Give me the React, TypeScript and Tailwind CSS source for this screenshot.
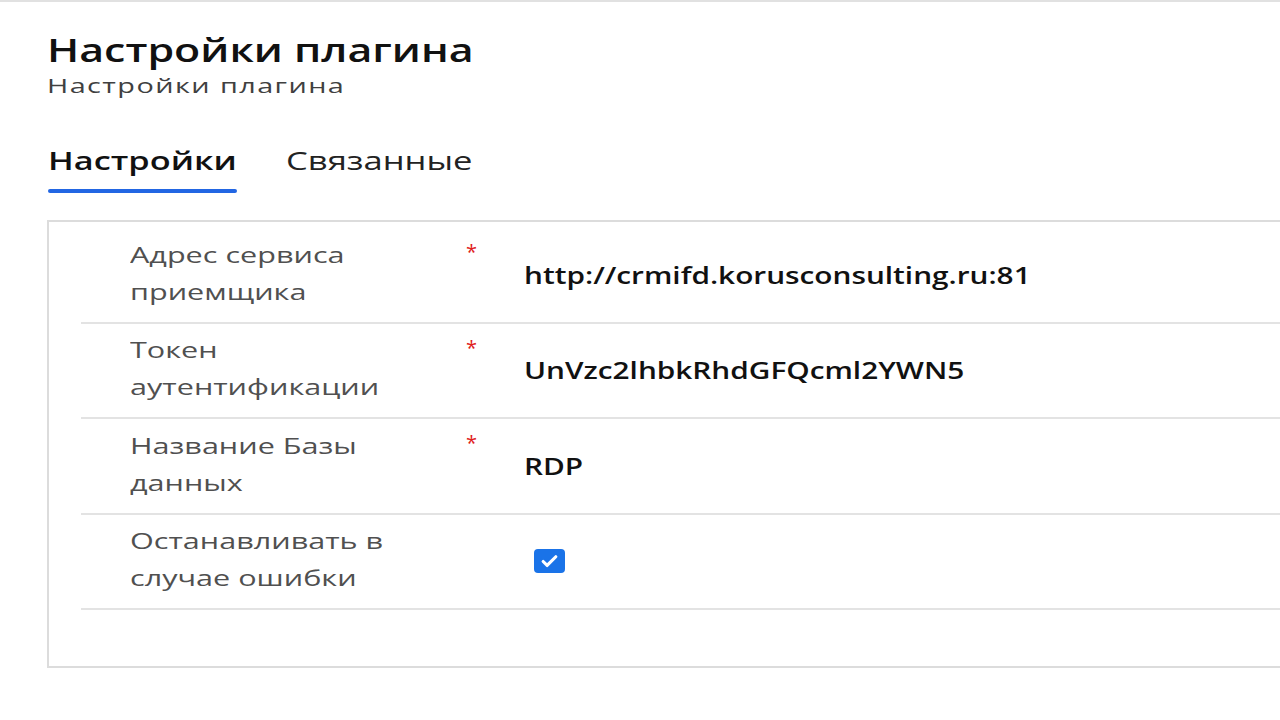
import { Check } from "lucide-react";

const fields = [
  { label: ["Адрес сервиса", "приемщика"], value: "http://crmifd.korusconsulting.ru:81", required: true },
  { label: ["Токен", "аутентификации"], value: "UnVzc2lhbkRhdGFQcml2YWN5", required: true },
  { label: ["Название Базы", "данных"], value: "RDP", required: true },
];

function Row({ label, required, children }: { label: string[]; required?: boolean; children: React.ReactNode }) {
  return (
    <div className="flex items-center h-[95.5px] border-b-2 border-[#e3e3e3]">
      <div className="w-[385px] pl-[49px] pb-[4px] text-[22px] leading-[37px] text-[#505050]">
        {label.map((l) => (
          <div key={l} className="origin-left scale-x-[1.39] whitespace-nowrap">
            {l}
          </div>
        ))}
      </div>
      <div className="w-[58px] self-start pt-[9px] text-[20px] text-[#e0201b]">{required ? "*" : ""}</div>
      <div className="flex-1">{children}</div>
    </div>
  );
}

export default function App() {
  return (
    <div
      className="w-[1280px] h-[720px] overflow-hidden bg-white border-t-2 border-[#e1e1e1]"
      style={{ fontFamily: '"Open Sans", "Noto Sans", sans-serif' }}
    >
      <div className="pl-[47px] pt-[26px]">
        <h1 className="origin-left scale-x-[1.3] whitespace-nowrap text-[33px] leading-[44px] font-semibold text-[#111]">
          Настройки плагина
        </h1>
        <p className="mt-[1px] origin-left scale-x-[1.44] whitespace-nowrap text-[20px] leading-[26px] tracking-[1px] text-[#404040]">
          Настройки плагина
        </p>
      </div>

      <div className="flex pl-[48px] mt-[43px]">
        <div className="flex flex-col w-[189px]">
          <span className="origin-left scale-x-[1.32] whitespace-nowrap text-[26px] leading-[36px] font-semibold text-[#111]">
            Настройки
          </span>
          <span className="mt-[11px] h-[4px] rounded-sm bg-[#2266e3]" />
        </div>
        <span className="ml-[49px] origin-left scale-x-[1.33] whitespace-nowrap text-[26px] leading-[36px] text-[#222]">
          Связанные
        </span>
      </div>

      <div className="ml-[47px] mt-[27px] w-[1300px] h-[448px] border-2 border-[#dcdcdc] pl-[32px] pt-[6px]">
        {fields.map((f) => (
          <Row key={f.value} label={f.label} required={f.required}>
            <span className="inline-block origin-left scale-x-[1.24] whitespace-nowrap text-[24px] font-semibold text-[#111]">
              {f.value}
            </span>
          </Row>
        ))}
        <Row label={["Останавливать в", "случае ошибки"]}>
          <span className="ml-[10px] flex items-center justify-center w-[31px] h-[24px] rounded-[4px] bg-[#1a73e8]">
            <Check className="w-[19px] h-[19px] text-white" strokeWidth={4} />
          </span>
        </Row>
      </div>
    </div>
  );
}
